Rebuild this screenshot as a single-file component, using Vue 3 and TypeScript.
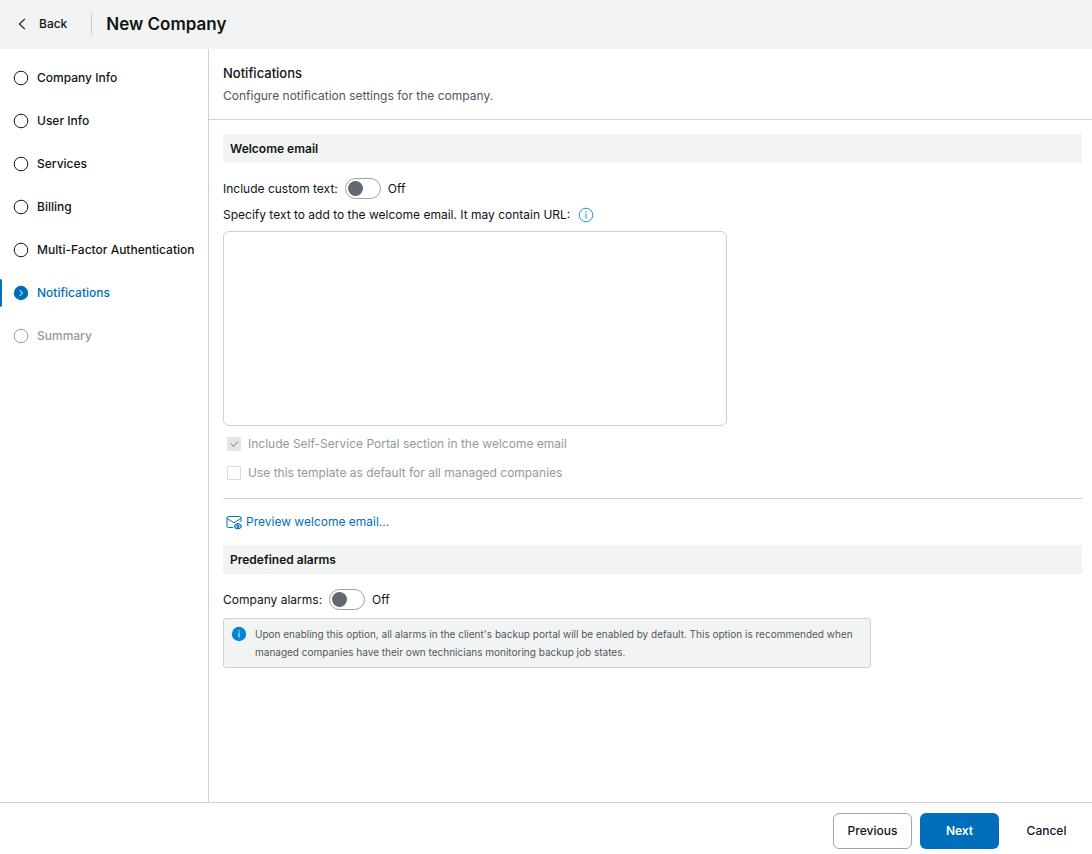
<script setup lang="ts">
import { ref } from 'vue'

interface Step {
  label: string
  state: 'open' | 'current' | 'disabled'
}

const steps: Step[] = [
  { label: 'Company Info', state: 'open' },
  { label: 'User Info', state: 'open' },
  { label: 'Services', state: 'open' },
  { label: 'Billing', state: 'open' },
  { label: 'Multi-Factor Authentication', state: 'open' },
  { label: 'Notifications', state: 'current' },
  { label: 'Summary', state: 'disabled' },
]

const includeText = ref(false)
const companyAlarms = ref(false)
const customText = ref('')
</script>

<template>
  <div class="wizard">
    <header class="topbar">
      <button type="button" class="back">
        <svg width="8" height="12" viewBox="0 0 8 12" fill="none" stroke="currentColor" stroke-width="1.1" aria-hidden="true">
          <path d="M6.8 0.8 1.4 6l5.4 5.2" />
        </svg>
        Back
      </button>
      <h1>New Company</h1>
    </header>

    <div class="body">
      <nav class="steps" aria-label="Steps">
        <button
          v-for="step in steps"
          :key="step.label"
          type="button"
          class="step"
          :class="step.state"
          :disabled="step.state === 'disabled'"
          :aria-current="step.state === 'current' ? 'step' : undefined"
        >
          <svg width="16" height="16" viewBox="0 0 16 16" fill="none" stroke="currentColor" aria-hidden="true">
            <template v-if="step.state === 'current'">
              <circle cx="8" cy="8" r="7.2" fill="currentColor" stroke="none" />
              <path d="m6.7 5 2.8 3-2.8 3" stroke="#fff" stroke-width="1" />
            </template>
            <circle v-else cx="8" cy="8" r="6.8" />
          </svg>
          {{ step.label }}
        </button>
      </nav>

      <main class="content">
        <div class="intro">
          <h2>Notifications</h2>
          <p>Configure notification settings for the company.</p>
        </div>

        <div class="form">
          <h3>Welcome email</h3>
          <div class="row toggle-row">
            <label for="include-text">Include custom text:</label>
            <input id="include-text" v-model="includeText" type="checkbox" role="switch" class="switch" />
            <span>{{ includeText ? 'On' : 'Off' }}</span>
          </div>
          <div class="row hint-row">
            <label for="custom-text">Specify text to add to the welcome email. It may contain URL:</label>
            <svg class="info" width="16" height="16" viewBox="0 0 16 16" aria-hidden="true">
              <circle cx="8" cy="8" r="6.8" fill="none" stroke="currentColor" />
              <path d="M7.5 4.2h1.1v1.2H7.5zM7.5 6.6h1.1v5H7.5z" fill="currentColor" />
            </svg>
          </div>
          <textarea id="custom-text" v-model="customText"></textarea>

          <label class="check">
            <input type="checkbox" checked disabled />
            Include Self-Service Portal section in the welcome email
          </label>
          <label class="check">
            <input type="checkbox" disabled />
            Use this template as default for all managed companies
          </label>

          <hr />

          <a href="#" class="preview" @click.prevent>
            <svg width="16" height="16" viewBox="0 0 16 16" fill="none" stroke="currentColor" aria-hidden="true">
              <path d="M7 13.5H2.5A1.5 1.5 0 0 1 1 12V4a1.5 1.5 0 0 1 1.5-1.5h11A1.5 1.5 0 0 1 15 4v4" />
              <path d="m1.2 4.5 6.8 4.3 6.800-4.300" />
              <path d="M8.300 12.200c1.600-3.400 5.500-3.400 7.100 0-1.600 3.400-5.500 3.400-7.100 0Z" stroke-width="1.200" />
              <circle cx="11.900" cy="12.200" r="1.100" stroke-width="1.200" />
            </svg>
            Preview welcome email...
          </a>

          <h3>Predefined alarms</h3>
          <div class="row toggle-row">
            <label for="company-alarms">Company alarms:</label>
            <input id="company-alarms" v-model="companyAlarms" type="checkbox" role="switch" class="switch" />
            <span>{{ companyAlarms ? 'On' : 'Off' }}</span>
          </div>
          <div class="note">
            <svg width="16" height="16" viewBox="0 0 16 16" aria-hidden="true">
              <circle cx="8" cy="8" r="7.200" fill="#0084d4" />
              <path d="M7.400 4.300h1.200v1.200H7.400zM7.400 6.600h1.200v5H7.400z" fill="#c4e4f8" />
            </svg>
            <p>
              Upon enabling this option, all alarms in the client's backup portal will be enabled by default. This option is recommended when managed companies have their own technicians monitoring backup job states.
            </p>
          </div>
        </div>
      </main>
    </div>

    <footer class="actions">
      <button type="button" class="btn outlined">Previous</button>
      <button type="button" class="btn primary">Next</button>
      <button type="button" class="btn">Cancel</button>
    </footer>
  </div>
</template>

<style>
body {
  margin: 0;
}
</style>

<style scoped>
.wizard {
  display: flex;
  flex-direction: column;
  min-height: 100vh;
  background: #fff;
  color: #111416;
  font-family: Inter, 'Liberation Sans', sans-serif;
  font-size: 12px;
  line-height: 18px;
}
.wizard * {
  box-sizing: border-box;
}
h1, h2, h3, p {
  margin: 0;
}
button {
  border: 0;
  background: none;
  color: inherit;
  font: inherit;
  cursor: pointer;
}
svg {
  flex: none;
}
.topbar {
  display: flex;
  align-items: center;
  padding: 12px 18px 13px;
  background: #f2f4f4;
}
.back {
  display: flex;
  align-items: center;
  gap: 13px;
  height: 22px;
  padding: 0 24px 0 0;
  border-right: 1px solid #c9cdce;
  font-weight: 500;
}
h1 {
  padding-left: 14px;
  font-size: 17px;
  line-height: 24px;
  font-weight: 600;
}
.body {
  display: flex;
  flex: 1;
}
.steps {
  display: flex;
  flex-direction: column;
  gap: 15px;
  width: 209px;
  flex: none;
  padding-top: 15px;
  border-right: 1px solid #cfd3d4;
}
.step {
  display: flex;
  align-items: center;
  gap: 8px;
  height: 28px;
  padding: 0 0 0 13px;
  font-weight: 500;
  white-space: nowrap;
  position: relative;
}
.step.current {
  color: #006eba;
}
.step.current::before {
  content: '';
  position: absolute;
  left: 0;
  top: 0;
  width: 2px;
  height: 28px;
  border-radius: 0 2px 2px 0;
  background: #006eba;
}
.step.disabled {
  color: #94999c;
}
.content {
  flex: 1;
  min-width: 0;
}
.intro {
  padding: 14px;
  border-bottom: 1px solid #cfd3d4;
}
h2 {
  font-size: 13px;
  line-height: 20px;
  font-weight: 500;
}
.intro p {
  padding-top: 4px;
  color: #50575d;
}
.form {
  padding: 14px 10px 14px 14px;
}
h3 {
  padding: 6px 7px 5px;
  background: #f2f4f4;
  font-size: 12px;
  line-height: 18px;
  font-weight: 600;
}
.row {
  display: flex;
  align-items: center;
}
.toggle-row {
  gap: 7px;
  padding-top: 15px;
}
.switch {
  appearance: none;
  width: 36px;
  height: 21px;
  margin: 0;
  padding: 2px;
  border: 1px solid #9ba1a4;
  border-radius: 11px;
  background: #fff;
}
.switch::before {
  content: '';
  display: block;
  width: 15px;
  height: 15px;
  border-radius: 50%;
  background: #61686f;
}
.switch:checked::before {
  margin-left: auto;
}
.hint-row {
  gap: 8px;
  padding: 7px 0;
}
.info {
  color: #2196dc;
}
textarea {
  display: block;
  width: 504px;
  max-width: 100%;
  height: 195px;
  margin-bottom: 9px;
  padding: 8px;
  border: 1px solid #cbd0d1;
  border-radius: 6px;
  background: #fff;
  font: inherit;
  resize: none;
}
.check {
  display: flex;
  align-items: center;
  gap: 7px;
  margin-bottom: 11px;
  padding-left: 4px;
  color: #94999c;
}
.check input {
  appearance: none;
  display: grid;
  place-items: center;
  width: 14px;
  height: 14px;
  margin: 0;
  border: 1px solid #d8dcdd;
  border-radius: 1px;
}
.check input:checked {
  padding-bottom: 2px;
  background: #e3e6e6;
  border-color: #e3e6e6;
}
.check input:checked::before {
  content: '';
  width: 7px;
  height: 4px;
  box-sizing: border-box;
  border: solid #8f9598;
  border-width: 0 0 1px 1px;
  transform: rotate(-45deg);
}
hr {
  margin: 16px 0 14px;
  border: 0;
  border-top: 1px solid #cfd3d4;
}
.preview {
  display: flex;
  align-items: center;
  gap: 4px;
  width: max-content;
  margin-bottom: 14px;
  padding-left: 3px;
  color: #0070b8;
  text-decoration: none;
}
.note {
  display: flex;
  gap: 8px;
  width: 648px;
  max-width: 100%;
  margin-top: 8px;
  padding: 6px 14px 6px 7px;
  border: 1px solid #cfd3d4;
  border-radius: 3px;
  background: #f2f4f4;
  color: #50575d;
  font-size: 10px;
}
.note svg {
  margin-top: 1px;
}
.actions {
  display: flex;
  justify-content: flex-end;
  gap: 8px;
  padding: 10px 6px 5px;
  border-top: 1px solid #cfd3d4;
}
.btn {
  min-width: 79px;
  height: 36px;
  padding: 0 12px;
  border-radius: 6px;
  font-weight: 500;
}
.outlined {
  border: 1px solid #a2a7a9;
}
.primary {
  background: #006eba;
  color: #fff;
  font-weight: 600;
}
</style>
